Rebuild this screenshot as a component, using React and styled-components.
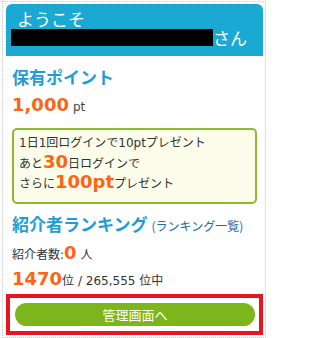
import styled, { createGlobalStyle } from "styled-components";

const GlobalStyle = createGlobalStyle`
  body {
    margin: 0;
    background: #ffffff;
    font-family: "DejaVu Sans", "Noto Sans CJK JP", sans-serif;
    color: #333333;
  }
`;

const Frame = styled.div`
  width: 257px;
  margin: 1px 0 0 2px;
  padding: 2px 2px 2px 3px;
  border: 1px dotted #c8c8c8;
`;

const Header = styled.div`
  height: 52px;
  box-sizing: border-box;
  padding: 5px 5px 0;
  background: #1aa9d3;
  border-radius: 6px 6px 0 0;
  color: #ffffff;
  font-family: "Noto Sans CJK JP", sans-serif;
  font-size: 17px;
`;

const Greeting = styled.div`
  padding-left: 6px;
  line-height: 20px;
`;

const NameRow = styled.div`
  display: flex;
  align-items: center;
  height: 17px;
  line-height: 17px;
`;

const Masked = styled.span`
  display: block;
  width: 202px;
  height: 17px;
  background: #000000;
`;

const Content = styled.div`
  padding: 9px 6px 0;
`;

const Title = styled.h2`
  margin: 0;
  font-family: "Noto Sans CJK JP", sans-serif;
  font-size: 17px;
  line-height: 24px;
  font-weight: bold;
  color: #1f9dd5;
  white-space: nowrap;
`;

const Link = styled.span`
  font-size: 12px;
  font-weight: normal;
  color: #2168a8;
  margin-left: 4px;
`;

const Row = styled.div`
  margin-top: ${(p) => p.$gap}px;
  height: 24px;
  line-height: 24px;
  font-size: 12px;
  white-space: nowrap;
`;

const Big = styled.span`
  font-family: "DejaVu Sans", sans-serif;
  font-weight: bold;
  font-size: 18px;
  line-height: 1;
  color: #fa6614;
  margin-right: ${(p) => p.$space || 0}px;
`;

const Unit = styled.span`
  font-size: 12px;
  color: #444444;
`;

const Bonus = styled.div`
  margin-top: 9px;
  padding: 3px 5px 9px;
  border: 2px solid #8dbb2e;
  border-radius: 5px;
  background: #fbfcea;
  font-size: 12px;
`;

const Line = styled.div`
  height: 20px;
  line-height: 20px;
  white-space: nowrap;
`;

const Highlight = styled.div`
  margin-top: 1px;
  padding: 5px 4px 5px 5px;
  border: 4px solid #e8141f;
`;

const Button = styled.button`
  display: block;
  width: 100%;
  height: 23px;
  border: none;
  border-radius: 12px;
  background: #7db61c;
  color: #ffffff;
  font-family: "Noto Sans CJK JP", sans-serif;
  font-size: 13px;
  padding: 0;
  cursor: pointer;
`;

export default function App() {
  return (
    <>
      <GlobalStyle />
      <Frame>
        <Header>
          <Greeting>ようこそ</Greeting>
          <NameRow>
            <Masked />
            <span>さん</span>
          </NameRow>
        </Header>
        <Content>
          <Title>保有ポイント</Title>
          <Row $gap={6}>
            <Big $space={4}>1,000</Big>
            <Unit>pt</Unit>
          </Row>
          <Bonus>
            <Line>1日1回ログインで10ptプレゼント</Line>
            <Line>
              あと<Big>30</Big>日ログインで
            </Line>
            <Line>
              さらに<Big>100pt</Big>プレゼント
            </Line>
          </Bonus>
          <Row $gap={8}>
            <Title as="div">
              紹介者ランキング<Link>(ランキング一覧)</Link>
            </Title>
          </Row>
          <Row $gap={7}>
            紹介者数:<Big $space={4}>0</Big>人
          </Row>
          <Row $gap={2}>
            <Big>1470</Big>位 / 265,555 位中
          </Row>
        </Content>
        <Highlight>
          <Button>管理画面へ</Button>
        </Highlight>
      </Frame>
    </>
  );
}
